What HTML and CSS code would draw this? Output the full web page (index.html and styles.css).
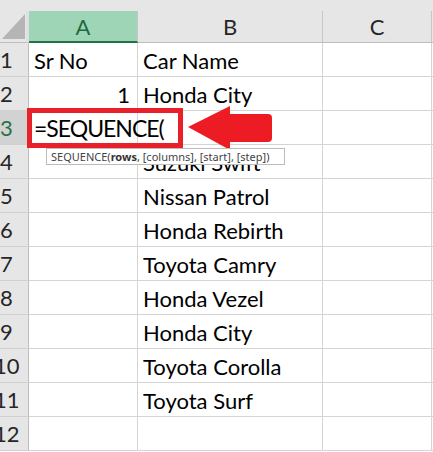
FILE: index.html
```html
<!doctype html>
<html lang="en">
<head>
  <meta charset="utf-8">
  <title>SEQUENCE</title>
  <link rel="stylesheet" href="styles.css">
</head>
<body>
  <div class="sheet">
    <div class="top-strip"></div>
    <div class="grid">
      <div class="corner"><div class="corner-tri"></div></div>
      <div class="col-head active">A</div>
      <div class="col-head">B</div>
      <div class="col-head">C</div>
      <div class="col-head last"></div>

      <div class="row-head">1</div>
      <div class="cell">Sr No</div>
      <div class="cell">Car Name</div>
      <div class="cell"></div>
      <div class="cell last"></div>

      <div class="row-head">2</div>
      <div class="cell num">1</div>
      <div class="cell">Honda City</div>
      <div class="cell"></div>
      <div class="cell last"></div>

      <div class="row-head current">3</div>
      <div class="cell editing">=SEQUENCE(<span class="caret"></span></div>
      <div class="cell"></div>
      <div class="cell"></div>
      <div class="cell last"></div>

      <div class="row-head">4</div>
      <div class="cell"></div>
      <div class="cell">Suzuki Swift</div>
      <div class="cell"></div>
      <div class="cell last"></div>

      <div class="row-head">5</div>
      <div class="cell"></div>
      <div class="cell">Nissan Patrol</div>
      <div class="cell"></div>
      <div class="cell last"></div>

      <div class="row-head">6</div>
      <div class="cell"></div>
      <div class="cell">Honda Rebirth</div>
      <div class="cell"></div>
      <div class="cell last"></div>

      <div class="row-head">7</div>
      <div class="cell"></div>
      <div class="cell">Toyota Camry</div>
      <div class="cell"></div>
      <div class="cell last"></div>

      <div class="row-head">8</div>
      <div class="cell"></div>
      <div class="cell">Honda Vezel</div>
      <div class="cell"></div>
      <div class="cell last"></div>

      <div class="row-head">9</div>
      <div class="cell"></div>
      <div class="cell">Honda City</div>
      <div class="cell"></div>
      <div class="cell last"></div>

      <div class="row-head wide">10</div>
      <div class="cell"></div>
      <div class="cell">Toyota Corolla</div>
      <div class="cell"></div>
      <div class="cell last"></div>

      <div class="row-head wide">11</div>
      <div class="cell"></div>
      <div class="cell">Toyota Surf</div>
      <div class="cell"></div>
      <div class="cell last"></div>

      <div class="row-head wide">12</div>
      <div class="cell"></div>
      <div class="cell"></div>
      <div class="cell"></div>
      <div class="cell last"></div>
    </div>

    <div class="highlight-box"></div>
    <div class="tooltip">SEQUENCE(<b>rows</b>, [columns], [start], [step])</div>
    <svg class="arrow" width="90" height="50" viewBox="0 0 90 50">
      <path d="M0 21 L42 0 L42 8 L80 8 Q84 8 84 12 L84 32 Q84 36 80 36 L42 36 L42 44 Z" fill="#ed1c24"/>
    </svg>
  </div>
</body>
</html>
```

FILE: styles.css
```css
* {
  box-sizing: border-box;
}

body {
  margin: 0;
  background: #fff;
  font-family: 'Lato', 'Liberation Sans', sans-serif;
  color: #000;
}

.sheet {
  position: relative;
  width: 433px;
  height: 452px;
  overflow: hidden;
}

.top-strip {
  height: 11px;
  background: #e6e6e6;
}

.grid {
  display: grid;
  grid-template-columns: 29px 109px 185px 109px 1fr;
  grid-template-rows: 32px repeat(12, 34px);
}

.corner {
  background: #e6e6e6;
  border-right: 3px solid #e0e0e0;
  border-bottom: 1px solid #bdbdbd;
  padding: 3px 1px 3px 2px;
}

.corner-tri {
  width: 100%;
  height: 100%;
  background: #b5b5b5;
  clip-path: polygon(100% 0, 100% 100%, 0 100%);
}

.col-head {
  background: #e6e6e6;
  border-right: 1px solid #c6c6c6;
  border-bottom: 1px solid #bdbdbd;
  font-size: 22px;
  color: #262626;
  display: flex;
  align-items: center;
  justify-content: center;
}

.col-head.active {
  background: #9fd5b7;
  color: #1e6b40;
  border-bottom: 2px solid #217346;
}

.col-head.last {
  border-right: none;
}

.row-head {
  background: #e6e6e6;
  border-right: 1px solid #bdbdbd;
  border-bottom: 1px solid #d0d0d0;
  font-size: 22px;
  color: #262626;
  display: flex;
  align-items: center;
  padding-left: 0;
}

.row-head.wide {
  text-indent: -6px;
  overflow: hidden;
}

.row-head.current {
  background: #d2d2d2;
  color: #217346;
}

.cell {
  border-right: 1px solid #d4d4d4;
  border-bottom: 1px solid #d4d4d4;
  font-size: 22px;
  display: flex;
  align-items: center;
  padding: 1px 5px 0;
  white-space: nowrap;
}

.cell.num {
  justify-content: flex-end;
  padding-right: 7px;
}

.cell.last {
  border-right: none;
}

.cell.editing {
  position: relative;
  z-index: 1;
  overflow: visible;
  background: #fff;
  font-size: 23px;
  letter-spacing: -1px;
}

.caret {
  display: inline-block;
  width: 1px;
  height: 26px;
  margin-left: 3px;
  background: #000;
}

.highlight-box {
  position: absolute;
  left: 27px;
  top: 108px;
  width: 156px;
  height: 40px;
  border: 5px solid #e8202a;
  z-index: 2;
}

.tooltip {
  position: absolute;
  left: 46px;
  top: 148px;
  width: 239px;
  height: 17px;
  background: #fff;
  border: 1px solid #bcbcbc;
  font-family: 'Noto Sans', 'Open Sans', sans-serif;
  font-size: 11px;
  line-height: 15px;
  color: #444;
  padding: 0 4px;
  white-space: nowrap;
  z-index: 3;
}

.tooltip b {
  color: #333;
}

.arrow {
  position: absolute;
  left: 188px;
  top: 106px;
  z-index: 2;
}
```
